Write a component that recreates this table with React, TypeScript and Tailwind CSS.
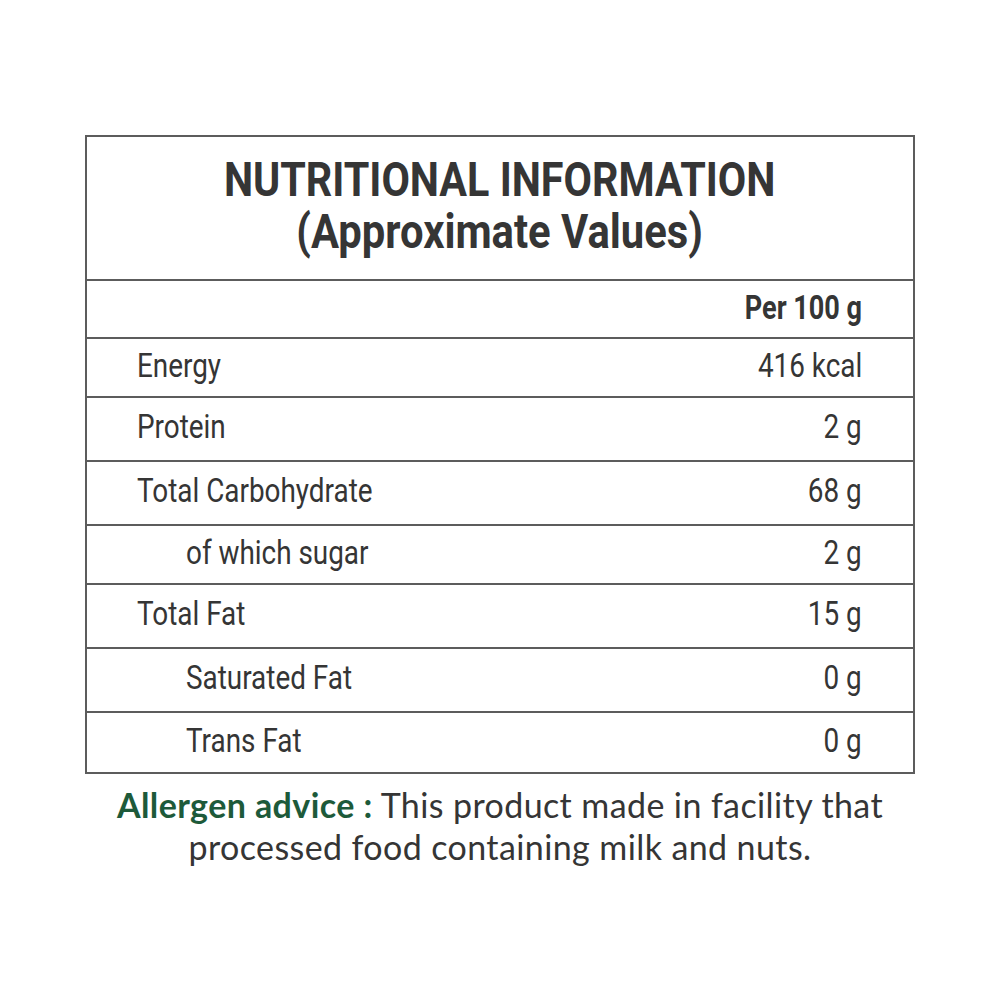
import React from "react";

const rows: { label: string; value: string; indent?: boolean; h: string }[] = [
  { label: "Energy", value: "416 kcal", h: "h-[59px]" },
  { label: "Protein", value: "2 g", h: "h-[64px]" },
  { label: "Total Carbohydrate", value: "68 g", h: "h-[64px]" },
  { label: "of which sugar", value: "2 g", indent: true, h: "h-[59px]" },
  { label: "Total Fat", value: "15 g", h: "h-[64px]" },
  { label: "Saturated Fat", value: "0 g", indent: true, h: "h-[64px]" },
  { label: "Trans Fat", value: "0 g", indent: true, h: "h-[59px]" },
];

export default function App() {
  return (
    <div className="w-[1000px] h-[1000px] bg-white flex flex-col items-center pt-[135px]" style={{ fontFamily: "Roboto, sans-serif" }}>
      <div className="w-[830px] border-2 border-[#5c5c5c] text-[#353535]">
        <div className="h-[144px] border-b-2 border-[#5c5c5c] flex flex-col items-center justify-center pb-[4px]">
          <span className="inline-block scale-x-[0.86] text-[48px] leading-[52px] font-bold whitespace-nowrap">NUTRITIONAL INFORMATION</span>
          <span className="inline-block scale-x-[0.87] text-[48px] leading-[52px] font-bold whitespace-nowrap">(Approximate Values)</span>
        </div>
        <div className="h-[58px] border-b-2 border-[#5c5c5c] flex items-center justify-end pr-[51px] pb-[2px]">
          <span className="inline-block origin-right scale-x-[0.82] text-[33px] font-bold whitespace-nowrap">Per 100 g</span>
        </div>
        {rows.map((r, i) => (
          <div key={r.label} className={`${r.h} ${i < rows.length - 1 ? "border-b-2 border-[#5c5c5c]" : ""} flex items-center justify-between pr-[51px] pb-[5px] ${r.indent ? "pl-[99px]" : "pl-[50px]"}`}>
            <span className="inline-block origin-left scale-x-[0.82] text-[34px] whitespace-nowrap">{r.label}</span>
            <span className="inline-block origin-right scale-x-[0.82] text-[34px] whitespace-nowrap">{r.value}</span>
          </div>
        ))}
      </div>
      <div className="mt-[10px] text-center text-[34px] leading-[42px] tracking-[0.4px] text-[#353535]" style={{ fontFamily: "Lato, sans-serif" }}>
        <span className="font-bold text-[#1d5a3a]">Allergen advice :</span> This product made in facility that
        <br />
        processed food containing milk and nuts.
      </div>
    </div>
  );
}
